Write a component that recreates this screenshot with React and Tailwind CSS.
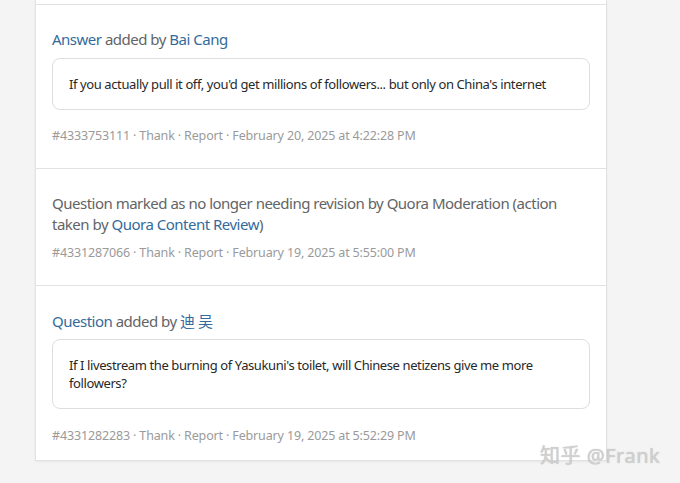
export default function App() {
  const font = { fontFamily: '"Noto Sans", "Noto Sans CJK SC", sans-serif' };
  const link = "text-[#346b9c]";
  const Meta = ({ children }) => (
    <div className="text-[12.5px] leading-[18px] tracking-[-0.15px] text-[#9a9a9a]">{children}</div>
  );
  return (
    <div
      className="relative w-[680px] h-[483px] overflow-hidden bg-[#f4f4f4]"
      style={font}
    >
      <div className="ml-[35px] w-[572px] bg-white border-x border-b border-[#e2e2e2] shadow-[0_1px_2px_rgba(0,0,0,0.06)]">
        <div className="h-[5px] border-b border-[#e2e2e2]" />
        {/* item 1 */}
        <div className="px-4 pt-[24px] pb-[23px] border-b border-[#e2e2e2]">
          <div className="text-[15px] leading-[21px] tracking-[-0.5px] text-[#636466]">
            <span className={link}>Answer</span> added by <span className={link}>Bai Cang</span>
          </div>
          <div className="mt-[8px] rounded-[8px] border border-[#dedede] px-4 py-[16px] text-[13px] leading-[18px] tracking-[-0.4px] text-[#282829]">
            If you actually pull it off, you'd get millions of followers... but only on China's internet
          </div>
          <div className="mt-[17px]">
            <Meta>#4333753111 · Thank · Report · February 20, 2025 at 4:22:28 PM</Meta>
          </div>
        </div>
        {/* item 2 */}
        <div className="px-4 pt-[24px] pb-[23px] border-b border-[#e2e2e2]">
          <div className="text-[15px] leading-[21px] tracking-[-0.5px] text-[#636466]">
            Question marked as no longer needing revision by Quora Moderation (action taken by{" "}
            <span className={link}>Quora Content Review</span>)
          </div>
          <div className="mt-[9px]">
            <Meta>#4331287066 · Thank · Report · February 19, 2025 at 5:55:00 PM</Meta>
          </div>
        </div>
        {/* item 3 */}
        <div className="px-4 pt-[25px] pb-[15px]">
          <div className="text-[15px] leading-[21px] tracking-[-0.5px] text-[#636466]">
            <span className={link}>Question</span> added by <span className={link}>迪 吴</span>
          </div>
          <div className="mt-[7px] rounded-[8px] border border-[#dedede] px-4 py-[16px] text-[13px] leading-[18px] tracking-[-0.4px] text-[#282829]">
            If I livestream the burning of Yasukuni's toilet, will Chinese netizens give me more followers?
          </div>
          <div className="mt-[18px]">
            <Meta>#4331282283 · Thank · Report · February 19, 2025 at 5:52:29 PM</Meta>
          </div>
        </div>
      </div>
      <div
        className="absolute left-[540px] top-[443px] text-[20px] leading-[26px] text-[#d0d0d0] tracking-[0.5px]"
        style={{ textShadow: "0 0 1px rgba(120,120,120,0.5)" }}
      >
        知乎 @Frank
      </div>
    </div>
  );
}
